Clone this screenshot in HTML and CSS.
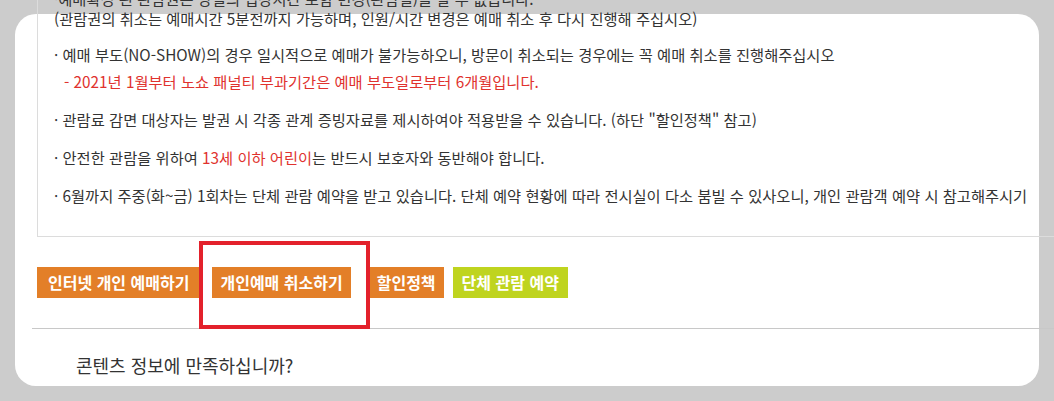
FILE: index.html
```html
<!DOCTYPE html>
<html lang="ko">
<head>
  <meta charset="UTF-8">
  <meta name="viewport" content="width=device-width, initial-scale=1.0">
  <title>관람 예매 안내</title>
  <link rel="stylesheet" href="styles.css">
</head>
<body>
<div class="panel">
  <div class="content">
    <div class="notice">
      <div class="notice-body">
        <p class="first">·예매확정 된 관람권은 당일의 입장시간 포함 변경(관람일)을 할 수 없습니다.<br>(관람권의 취소는 예매시간 5분전까지 가능하며, 인원/시간 변경은 예매 취소 후 다시 진행해 주십시오)</p>
        <p>· 예매 부도(NO-SHOW)의 경우 일시적으로 예매가 불가능하오니, 방문이 취소되는 경우에는 꼭 예매 취소를 진행해주십시오<br><span class="sub red">- 2021년 1월부터 노쇼 패널티 부과기간은 예매 부도일로부터 6개월입니다.</span></p>
        <p>· 관람료 감면 대상자는 발권 시 각종 관계 증빙자료를 제시하여야 적용받을 수 있습니다. (하단 "할인정책" 참고)</p>
        <p>· 안전한 관람을 위하여 <span class="red">13세 이하 어린이</span>는 반드시 보호자와 동반해야 합니다.</p>
        <p>· 6월까지 주중(화~금) 1회차는 단체 관람 예약을 받고 있습니다. 단체 예약 현황에 따라 전시실이 다소 붐빌 수 있사오니, 개인 관람객 예약 시 참고해주시기</p>
      </div>
    </div>

    <div class="btn-row">
      <a class="btn btn-wide" href="#">인터넷 개인 예매하기</a>
      <a class="btn btn-marked" href="#">개인예매 취소하기</a>
      <a class="btn btn-policy" href="#">할인정책</a>
      <a class="btn btn-group" href="#">단체 관람 예약</a>
    </div>

    <div class="survey">
      <div class="survey-title">콘텐츠 정보에 만족하십니까?</div>
    </div>
  </div>
</div>
</body>
</html>
```

FILE: styles.css
```css
html, body {
  margin: 0;
  height: 401px;
  overflow: hidden;
}
body {
  background: #cccccc;
  font-family: "Noto Sans CJK KR", "Noto Sans", sans-serif;
  color: #333;
}
.panel {
  margin: 14px 15px 0;
  height: 372px;
  background: #fff;
  border-radius: 21px;
}
.content {
  margin: 0 -15px 0 22px;
  position: relative;
  top: -26px;
}
.notice {
  border-left: 1px solid #dcdcdc;
  border-bottom: 1px solid #dcdcdc;
  padding: 0 0 16px 16px;
}
.notice-body {
  overflow: hidden;
  white-space: nowrap;
  margin-right: 15px;
}
.notice p {
  margin: 0 0 11px;
  font-size: 15.3px;
  line-height: 27px;
}
.notice p.first {
  line-height: 20px;
  margin-bottom: 13px;
}
.red {
  color: #e0322e;
}
.sub {
  padding-left: 10px;
}
.btn-row {
  display: flex;
  margin-top: 30px;
}
.btn {
  display: block;
  height: 31px;
  line-height: 31px;
  padding: 0 8px;
  font-size: 16px;
  font-weight: bold;
  color: #fff;
  text-decoration: none;
  background: #e37f28;
}
.btn-wide {
  padding: 0 11px;
}
.btn-marked {
  position: relative;
  margin-left: 12px;
}
.btn-marked::after {
  content: "";
  position: absolute;
  left: -13px;
  right: -19px;
  top: -26px;
  bottom: -31px;
  border: 4px solid #e3212b;
}
.btn-policy {
  margin-left: 18px;
}
.btn-group {
  margin-left: 9px;
  padding: 0 9px;
  background: #bfd41f;
}
.survey {
  margin: 30px 0 0 -5px;
  border-top: 1px solid #c8c8c8;
  padding: 24px 0 0 44px;
}
.survey-title {
  font-size: 18px;
  line-height: 24px;
}
```
